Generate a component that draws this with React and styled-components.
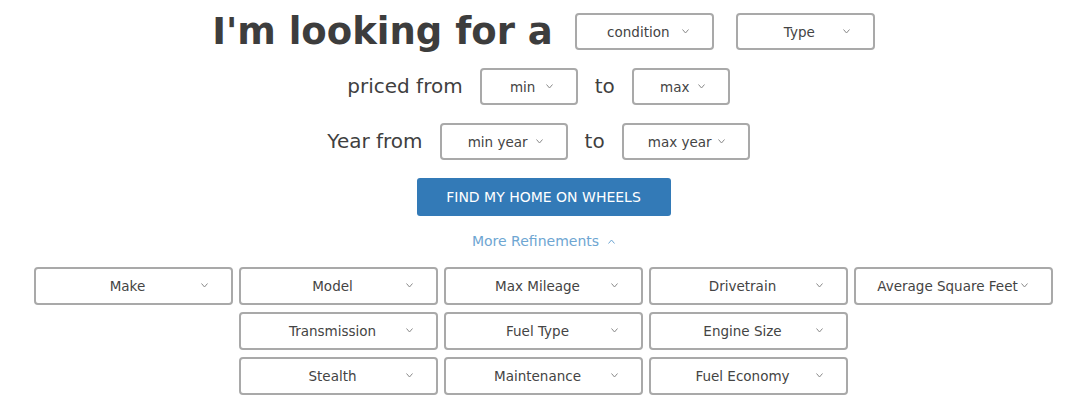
import styled, { createGlobalStyle } from "styled-components";

const GlobalStyle = createGlobalStyle`
  body {
    margin: 0;
    background: #ffffff;
    font-family: "DejaVu Sans", Verdana, sans-serif;
    color: #3f3f3f;
  }
`;

const Page = styled.div`
  display: flex;
  flex-direction: column;
  align-items: center;
  padding-top: 13px;
`;

const SearchRow = styled.div`
  display: flex;
  align-items: center;
  justify-content: center;
  gap: ${(p) => p.gap || 17}px;
  width: 100%;
  box-sizing: border-box;
  padding-right: ${(p) => p.shift || 0}px;
  margin-bottom: 18px;
`;

const Headline = styled.h1`
  margin: 0;
  font-size: 37px;
  font-weight: bold;
  color: #3d3d3d;
  line-height: 37px;
`;

const Label = styled.span`
  font-size: 20px;
  color: #3f3f3f;
  line-height: 37px;
`;

const Select = styled.button`
  position: relative;
  width: ${(p) => p.w}px;
  height: ${(p) => p.h || 37}px;
  box-sizing: border-box;
  padding: 0 14px 0 2px;
  border: 2px solid #a9a9a9;
  border-radius: 4px;
  background: #ffffff;
  font-family: inherit;
  font-size: 13.5px;
  color: #444444;
  text-align: center;
  white-space: nowrap;
  cursor: pointer;
`;

const Caret = styled.svg`
  position: absolute;
  right: 23px;
  top: 50%;
  margin-top: -3px;
  width: 7px;
  height: 5px;
  fill: none;
  stroke: #8a8a8a;
  stroke-width: 1;
`;

const FindButton = styled.button`
  width: 254px;
  height: 38px;
  border: none;
  border-radius: 3px;
  background: #337ab7;
  color: #ffffff;
  font-family: inherit;
  font-size: 14px;
  cursor: pointer;
`;

const Refinements = styled.button`
  display: flex;
  align-items: center;
  gap: 9px;
  margin: 17px 0 18px;
  padding: 0;
  border: none;
  background: none;
  font-family: inherit;
  font-size: 14px;
  color: #6ea6d2;
  cursor: pointer;
`;

const UpCaret = styled.svg`
  width: 7px;
  height: 5px;
  fill: none;
  stroke: #6ea6d2;
  stroke-width: 1;
`;

const Grid = styled.div`
  display: flex;
  flex-direction: column;
  gap: 7px;
  width: 100%;
`;

const GridRow = styled.div`
  display: flex;
  justify-content: center;
  gap: 6px;
`;

const Dropdown = ({ label, w, h }) => (
  <Select w={w} h={h}>
    {label}
    <Caret viewBox="0 0 7 5">
      <polyline points="0.5,0.5 3.5,4 6.5,0.5" />
    </Caret>
  </Select>
);

const refineRows = [
  ["Make", "Model", "Max Mileage", "Drivetrain", "Average Square Feet"],
  ["Transmission", "Fuel Type", "Engine Size"],
  ["Stealth", "Maintenance", "Fuel Economy"],
];

const App = () => {
  return (
    <Page>
      <GlobalStyle />
      <SearchRow gap={22}>
        <Headline>I'm looking for a</Headline>
        <Dropdown label="condition" w={139} />
        <Dropdown label="Type" w={139} />
      </SearchRow>
      <SearchRow shift={10}>
        <Label>priced from</Label>
        <Dropdown label="min" w={98} />
        <Label>to</Label>
        <Dropdown label="max" w={98} />
      </SearchRow>
      <SearchRow shift={10}>
        <Label>Year from</Label>
        <Dropdown label="min year" w={128} />
        <Label>to</Label>
        <Dropdown label="max year" w={128} />
      </SearchRow>
      <FindButton>FIND MY HOME ON WHEELS</FindButton>
      <Refinements>
        More Refinements
        <UpCaret viewBox="0 0 7 5">
          <polyline points="0.5,4.5 3.5,1 6.5,4.5" />
        </UpCaret>
      </Refinements>
      <Grid>
        {refineRows.map((row, i) => (
          <GridRow key={i}>
            {row.map((name) => (
              <Dropdown key={name} label={name} w={199} h={38} />
            ))}
          </GridRow>
        ))}
      </Grid>
    </Page>
  );
};

export default App;
